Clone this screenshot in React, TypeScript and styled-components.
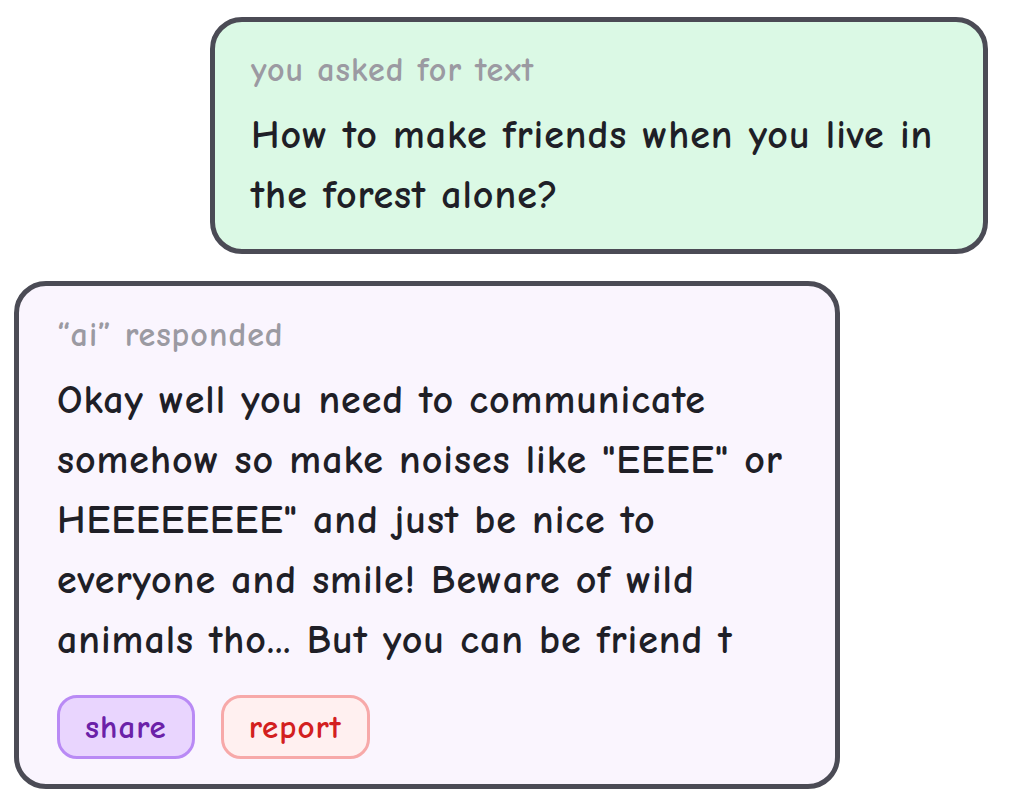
import React from 'react'
import styled, { createGlobalStyle } from 'styled-components'

const GlobalStyle = createGlobalStyle`
  html, body {
    margin: 0;
    padding: 0;
    background: #ffffff;
  }
  body {
    font-family: "Comic Neue", "Comic Sans MS", "DejaVu Sans", sans-serif;
    font-weight: 700;
  }
`

const Thread = styled('main')`
  display: flex;
  flex-direction: column;
  gap: 27px;
  padding: 17px 39px 14px 14px;
  width: 1027px;
  box-sizing: border-box;
`

const Bubble = styled('section')<{ $tone: 'user' | 'ai' }>`
  box-sizing: border-box;
  border: 5px solid #4b4b55;
  border-radius: 32px;
  background: ${(p) => (p.$tone === 'user' ? '#dbf9e5' : '#faf5fe')};
  align-self: ${(p) => (p.$tone === 'user' ? 'flex-end' : 'flex-start')};
  width: ${(p) => (p.$tone === 'user' ? '778px' : '826px')};
  padding: ${(p) => (p.$tone === 'user' ? '28px 36px 24px 36px' : '29px 38px 25px 38px')};
`

const Label = styled('div')`
  font-size: 34px;
  line-height: 40px;
  color: #9b9aa2;
  letter-spacing: 1px;
`

const Body = styled('p')`
  margin: 15px 0 0 0;
  font-size: 40px;
  line-height: 60px;
  color: #1f1f27;
  white-space: pre;
  letter-spacing: 0.95px;
`

const Actions = styled('div')`
  display: flex;
  gap: 26px;
  margin-top: 25px;
`

const Pill = styled('button')<{ $kind: 'share' | 'report' }>`
  height: 64px;
  padding: 0 25px;
  border-radius: 20px;
  border: 3px solid ${(p) => (p.$kind === 'share' ? '#b98af5' : '#f7a9a9')};
  background: ${(p) => (p.$kind === 'share' ? '#e9d5fe' : '#fff0f0')};
  color: ${(p) => (p.$kind === 'share' ? '#6b21a8' : '#d32020')};
  font-family: inherit;
  font-weight: 700;
  font-size: 33px;
  letter-spacing: 1px;
  cursor: pointer;
`

export default function App() {
  return (
    <>
      <GlobalStyle />
      <Thread>
        <Bubble $tone="user">
          <Label>you asked for text</Label>
          <Body>{'How to make friends when you live in\nthe forest alone?'}</Body>
        </Bubble>
        <Bubble $tone="ai">
          <Label>“ai” responded</Label>
          <Body>
            {
              'Okay well you need to communicate\nsomehow so make noises like "EEEE" or\nHEEEEEEEE" and just be nice to\neveryone and smile! Beware of wild\nanimals tho... But you can be friend t'
            }
          </Body>
          <Actions>
            <Pill $kind="share">share</Pill>
            <Pill $kind="report">report</Pill>
          </Actions>
        </Bubble>
      </Thread>
    </>
  )
}
